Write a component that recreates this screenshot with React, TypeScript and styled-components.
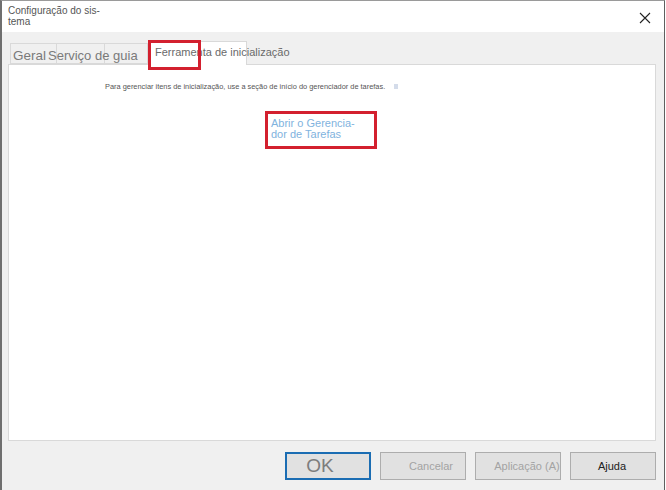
import React from 'react';
import styled, { createGlobalStyle } from 'styled-components';

const GlobalStyle = createGlobalStyle`
  html, body {
    margin: 0;
    padding: 0;
    background: #ffffff;
  }
  * {
    box-sizing: border-box;
  }
`;

type TabInfo = {
  label: string;
  width: number;
  indent: number;
  size: number;
  selected?: boolean;
};

const tabs: TabInfo[] = [
  { label: 'Geral', width: 47, indent: 2, size: 13.5 },
  { label: 'Serviço de guia', width: 48, indent: -9, size: 13 },
  { label: '', width: 43, indent: 0, size: 13 },
  { label: 'Ferramenta de inicialização', width: 99, indent: 6, size: 11, selected: true },
];

type ButtonInfo = {
  label: string;
  focused?: boolean;
  disabled?: boolean;
  shift: number;
  size: number;
};

const buttons: ButtonInfo[] = [
  { label: 'OK', focused: true, shift: -8, size: 19 },
  { label: 'Cancelar', disabled: true, shift: 8, size: 11 },
  { label: 'Aplicação (A)', disabled: true, shift: 9, size: 11 },
  { label: 'Ajuda', shift: -1, size: 11 },
];

function App(): React.ReactElement {
  return (
    <>
      <GlobalStyle />
      <Window>
        <TitleBar>
          <Title>
            Configuração do sis-
            <br />
            tema
          </Title>
          <CloseButton aria-label="Fechar">
            <svg width="12" height="12" viewBox="0 0 12 12">
              <path d="M1 1 L11 11 M11 1 L1 11" stroke="#222" strokeWidth="1.1" fill="none" />
            </svg>
          </CloseButton>
        </TitleBar>
        <Body>
          <TabStrip>
            {tabs.map((t, i) => (
              <Tab key={i} $width={t.width} $selected={t.selected}>
                <TabLabel $indent={t.indent} $size={t.size} $selected={t.selected}>
                  {t.label}
                </TabLabel>
                {t.selected && <TabMark />}
              </Tab>
            ))}
          </TabStrip>
          <Panel>
            <Description>
              Para gerenciar itens de inicialização, use a seção de início do gerenciador de tarefas.
              <FaintIcon />
            </Description>
            <LinkBox>
              <TaskLink href="#">
                Abrir o Gerencia-
                <br />
                dor de Tarefas
              </TaskLink>
            </LinkBox>
          </Panel>
          <Footer>
            {buttons.map((b) => (
              <DialogButton
                key={b.label}
                $focused={b.focused}
                $disabled={b.disabled}
                $shift={b.shift}
                $size={b.size}
              >
                {b.label}
              </DialogButton>
            ))}
          </Footer>
        </Body>
      </Window>
    </>
  );
}

export default App;

const Window = styled.div`
  width: 665px;
  height: 490px;
  display: flex;
  flex-direction: column;
  border-left: 2px solid #6f6f6f;
  border-right: 1px solid #5f5f5f;
  border-top: 1px solid #9a9a9a;
  font-family: 'Liberation Sans', Arial, sans-serif;
  background: #f0f0f0;
  overflow: hidden;
`;

const TitleBar = styled.div`
  height: 31px;
  flex: none;
  background: #ffffff;
  display: flex;
  justify-content: space-between;
  align-items: flex-start;
`;

const Title = styled.div`
  padding: 4px 0 0 6px;
  font-size: 10px;
  line-height: 11px;
  color: #555555;
  white-space: nowrap;
`;

const CloseButton = styled.div`
  width: 28px;
  height: 28px;
  margin: 3px 5px 0 0;
  display: flex;
  align-items: center;
  justify-content: center;
`;

const Body = styled.div`
  flex: 1;
  display: flex;
  flex-direction: column;
  padding: 8px 8px 10px 6px;
  background: #f0f0f0;
`;

const TabStrip = styled.div`
  height: 24px;
  flex: none;
  display: flex;
  align-items: flex-end;
  padding-left: 2px;
  position: relative;
  z-index: 1;
`;

const Tab = styled.div<{ $width: number; $selected?: boolean }>`
  position: relative;
  width: ${(p) => p.$width}px;
  height: ${(p) => (p.$selected ? 24 : 21)}px;
  margin-bottom: ${(p) => (p.$selected ? -1 : 0)}px;
  background: ${(p) => (p.$selected ? '#ffffff' : '#f0f0f0')};
  border: 1px solid #d9d9d9;
  border-bottom: ${(p) => (p.$selected ? 'none' : '1px solid #d9d9d9')};
  border-left: ${(p) => (p.$selected ? '1px solid #d9d9d9' : 'none')};
  &:first-child {
    border-left: 1px solid #d9d9d9;
  }
  display: flex;
  align-items: center;
  white-space: nowrap;
`;

const TabLabel = styled.span<{ $indent: number; $size: number; $selected?: boolean }>`
  margin-left: ${(p) => p.$indent}px;
  margin-top: ${(p) => (p.$selected ? -3 : 4)}px;
  font-size: ${(p) => p.$size}px;
  color: ${(p) => (p.$selected ? '#6a6a6a' : '#7a7a7a')};
  position: relative;
  z-index: 2;
`;

const TabMark = styled.div`
  position: absolute;
  left: -1px;
  top: -2px;
  width: 53px;
  height: 30px;
  border: 3px solid #d3202f;
  z-index: 3;
`;

const Panel = styled.div`
  flex: 1;
  background: #ffffff;
  border: 1px solid #d9d9d9;
  display: flex;
  flex-direction: column;
  align-items: flex-start;
`;

const Description = styled.div`
  margin: 17px 0 0 96px;
  font-size: 7.4px;
  line-height: 9px;
  color: #555555;
  white-space: nowrap;
  display: flex;
  align-items: center;
`;

const FaintIcon = styled.span`
  display: inline-block;
  width: 4px;
  height: 5px;
  margin-left: 9px;
  background: #d4dcea;
`;

const LinkBox = styled.div`
  margin: 20px 0 0 256px;
  width: 112px;
  height: 38px;
  border: 3px solid #d3202f;
  padding: 4px 0 0 3px;
`;

const TaskLink = styled.a`
  display: block;
  font-size: 11px;
  line-height: 11px;
  color: #7fb3de;
  text-decoration: none;
`;

const Footer = styled.div`
  height: 28px;
  flex: none;
  margin-top: 11px;
  display: flex;
  justify-content: flex-end;
  gap: 9px;
`;

const DialogButton = styled.div<{
  $focused?: boolean;
  $disabled?: boolean;
  $shift: number;
  $size: number;
}>`
  width: 86px;
  height: 28px;
  display: flex;
  align-items: center;
  justify-content: center;
  padding-left: ${(p) => Math.max(p.$shift, 0) * 2}px;
  padding-right: ${(p) => Math.max(-p.$shift, 0) * 2}px;
  background: #e1e1e1;
  border: ${(p) => (p.$focused ? '2px solid #1b6db3' : '1px solid #adadad')};
  font-size: ${(p) => p.$size}px;
  color: ${(p) => (p.$focused ? '#7d7d7d' : p.$disabled ? '#a3a3a3' : '#222222')};
  white-space: nowrap;
`;
